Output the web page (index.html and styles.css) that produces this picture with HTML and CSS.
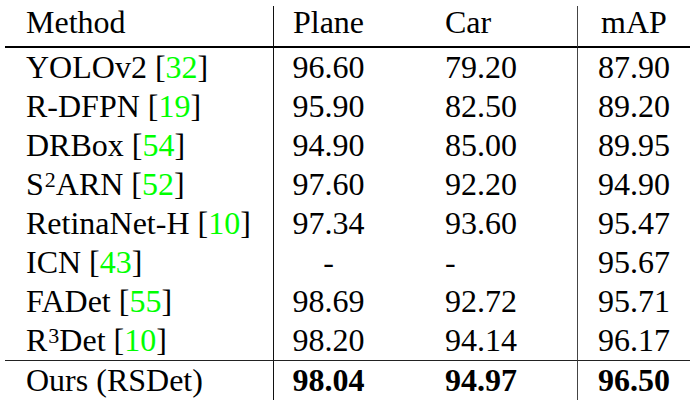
FILE: index.html
```html
<!DOCTYPE html>
<html lang="en">
<head>
  <meta charset="UTF-8">
  <meta name="viewport" content="width=device-width, initial-scale=1.0">
  <title>Results</title>
  <link rel="stylesheet" href="styles.css">
</head>
<body>
  <!-- results table -->
  <table class="results">
    <thead>
      <tr>
        <th class="col-method">Method</th>
        <th class="col-plane">Plane</th>
        <th class="col-car">Car</th>
        <th class="col-map">mAP</th>
      </tr>
    </thead>
    <tbody>
      <tr>
        <td class="col-method">YOLOv2 [<span class="cite">32</span>]</td>
        <td class="col-plane">96.60</td>
        <td class="col-car">79.20</td>
        <td class="col-map">87.90</td>
      </tr>
      <tr>
        <td class="col-method">R-DFPN [<span class="cite">19</span>]</td>
        <td class="col-plane">95.90</td>
        <td class="col-car">82.50</td>
        <td class="col-map">89.20</td>
      </tr>
      <tr>
        <td class="col-method">DRBox [<span class="cite">54</span>]</td>
        <td class="col-plane">94.90</td>
        <td class="col-car">85.00</td>
        <td class="col-map">89.95</td>
      </tr>
      <tr>
        <td class="col-method">S<sup>2</sup>ARN [<span class="cite">52</span>]</td>
        <td class="col-plane">97.60</td>
        <td class="col-car">92.20</td>
        <td class="col-map">94.90</td>
      </tr>
      <tr>
        <td class="col-method">RetinaNet-H [<span class="cite">10</span>]</td>
        <td class="col-plane">97.34</td>
        <td class="col-car">93.60</td>
        <td class="col-map">95.47</td>
      </tr>
      <tr>
        <td class="col-method">ICN [<span class="cite">43</span>]</td>
        <td class="col-plane">-</td>
        <td class="col-car">-</td>
        <td class="col-map">95.67</td>
      </tr>
      <tr>
        <td class="col-method">FADet [<span class="cite">55</span>]</td>
        <td class="col-plane">98.69</td>
        <td class="col-car">92.72</td>
        <td class="col-map">95.71</td>
      </tr>
      <tr>
        <td class="col-method">R<sup>3</sup>Det [<span class="cite">10</span>]</td>
        <td class="col-plane">98.20</td>
        <td class="col-car">94.14</td>
        <td class="col-map">96.17</td>
      </tr>
      <!-- our row -->
      <tr class="ours">
        <td class="col-method">Ours (RSDet)</td>
        <td class="col-plane"><b>98.04</b></td>
        <td class="col-car"><b>94.97</b></td>
        <td class="col-map"><b>96.50</b></td>
      </tr>
    </tbody>
  </table>
</body>
</html>
```

FILE: styles.css
```css
body {
    margin: 6px 0 0 5px;
    background: #fff;
    overflow: hidden;
}

.results {
    border-collapse: separate;
    border-spacing: 0;
    font-family: "Liberation Serif", "Times New Roman", serif;
    font-size: 32px;
    color: #000;
}

.results th,
.results td {
    padding: 0;
    font-weight: normal;
    white-space: nowrap;
}

/* header row */
.results th {
    height: 40px;
    line-height: 32px;
    padding-bottom: 8px;
    box-sizing: border-box;
    border-bottom: 2px solid #000;
    vertical-align: top;
}

.results td {
    height: 39px;
    line-height: 39px;
}

/* columns */
.col-method {
    width: 247px;
    padding-left: 21px !important;
    text-align: left;
}

.col-plane {
    width: 109px;
    text-align: center;
    border-left: 1px solid #111;
}

.col-car {
    width: 132px;
    padding-left: 62px !important;
    text-align: left;
}

.col-map {
    width: 112px;
    text-align: center;
    border-left: 1px solid #444;
}

/* last row */
.ours td {
    border-top: 1px solid #222;
}

.ours b {
    font-weight: bold;
}

.cite {
    color: #00ff00;
}

sup {
    font-size: 22px;
    line-height: 0;
    vertical-align: 8px;
    margin-left: 1px;
}
```
